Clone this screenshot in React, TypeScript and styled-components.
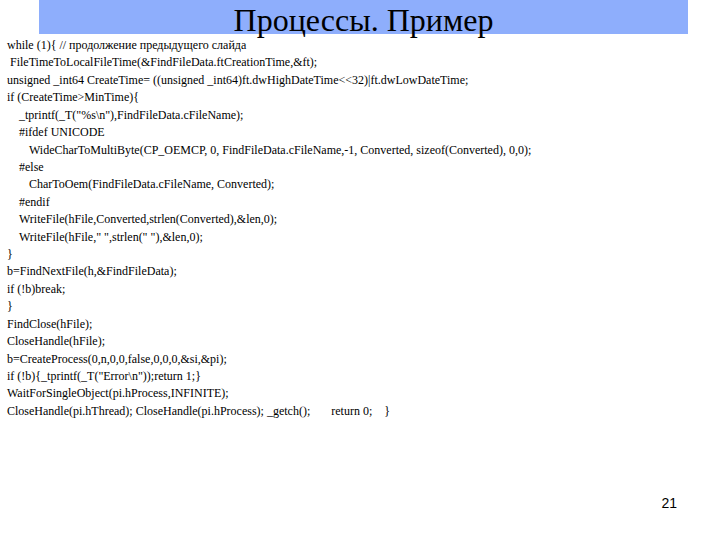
import React from 'react';
import styled, { createGlobalStyle } from 'styled-components';

const codeLines: { text: string; indent?: number }[] = [
  { text: 'while (1){ // продолжение предыдущего слайда' },
  { text: ' FileTimeToLocalFileTime(&FindFileData.ftCreationTime,&ft);' },
  { text: 'unsigned _int64 CreateTime= ((unsigned _int64)ft.dwHighDateTime<<32)|ft.dwLowDateTime;' },
  { text: 'if (CreateTime>MinTime){' },
  { text: '_tprintf(_T("%s\\n"),FindFileData.cFileName);', indent: 12 },
  { text: '#ifdef UNICODE', indent: 12 },
  { text: 'WideCharToMultiByte(CP_OEMCP, 0, FindFileData.cFileName,-1, Converted, sizeof(Converted), 0,0);', indent: 22 },
  { text: '#else', indent: 12 },
  { text: 'CharToOem(FindFileData.cFileName, Converted);', indent: 22 },
  { text: '#endif', indent: 12 },
  { text: 'WriteFile(hFile,Converted,strlen(Converted),&len,0);', indent: 12 },
  { text: 'WriteFile(hFile," ",strlen(" "),&len,0);', indent: 12 },
  { text: '}' },
  { text: 'b=FindNextFile(h,&FindFileData);' },
  { text: 'if (!b)break;' },
  { text: '}' },
  { text: 'FindClose(hFile);' },
  { text: 'CloseHandle(hFile);' },
  { text: 'b=CreateProcess(0,n,0,0,false,0,0,0,&si,&pi);' },
  { text: 'if (!b){_tprintf(_T("Error\\n"));return 1;}' },
  { text: 'WaitForSingleObject(pi.hProcess,INFINITE);' },
  { text: 'CloseHandle(pi.hThread); CloseHandle(pi.hProcess); _getch();       return 0;    }' },
];

const App = () => {
  return (
    <Slide>
      <GlobalStyle />
      <TitleBar>
        <Title>Процессы. Пример</Title>
      </TitleBar>
      <Code>
        {codeLines.map((line, i) => (
          <CodeLine key={i} $indent={line.indent ?? 0}>
            {line.text}
          </CodeLine>
        ))}
      </Code>
      <Footer>
        <PageNumber>21</PageNumber>
      </Footer>
    </Slide>
  );
};

export default App;

const GlobalStyle = createGlobalStyle`
  html, body {
    margin: 0;
    padding: 0;
    background: #fff;
  }
`;

const Slide = styled.div`
  display: flex;
  flex-direction: column;
  width: 720px;
  height: 540px;
  overflow: hidden;
  background: #fff;
`;

const TitleBar = styled.header`
  display: flex;
  justify-content: center;
  height: 33.5px;
  margin: 0 32px 0 39px;
  background: #8eaefc;
`;

const Title = styled.h1`
  margin: 0;
  font-family: 'Liberation Serif', serif;
  font-size: 32px;
  font-weight: 400;
  line-height: 40px;
  color: #000;
  white-space: nowrap;
`;

const Code = styled.div`
  display: flex;
  flex-direction: column;
  padding: 3.5px 0 0 7px;
`;

const CodeLine = styled.div<{ $indent: number }>`
  height: 17.43px;
  padding-left: ${(p) => p.$indent}px;
  font-family: 'Liberation Serif', serif;
  font-size: 12px;
  line-height: 17.43px;
  color: #000;
  white-space: pre;
`;

const Footer = styled.footer`
  display: flex;
  justify-content: flex-end;
  margin-top: auto;
  padding: 0 43px 29px 0;
`;

const PageNumber = styled.span`
  font-family: 'Liberation Sans', sans-serif;
  font-size: 14px;
  line-height: 16px;
  color: #000;
`;
